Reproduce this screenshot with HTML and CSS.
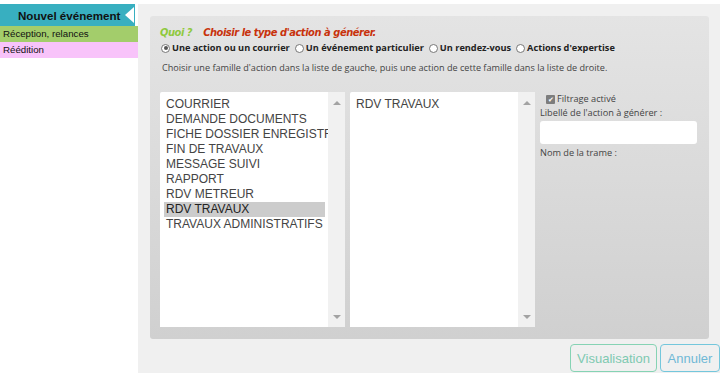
FILE: index.html
```html
<!DOCTYPE html>
<html lang="fr">
<head>
    <meta charset="UTF-8">
    <title>Nouvel événement</title>
    <link rel="stylesheet" href="styles.css">
</head>
<body>
    <div class="app">
        <aside class="menu">
            <div class="menu-title">
                <span>Nouvel événement</span>
                <span class="menu-arrow"></span>
            </div>
            <div class="menu-item green">Réception, relances</div>
            <div class="menu-item pink">Réédition</div>
        </aside>

        <main class="content">
            <section class="panel">
                <h2 class="panel-title"><span class="quoi">Quoi ?</span> <span class="what">Choisir le type d'action à générer.</span></h2>

                <div class="choices">
                    <label><span class="radio checked"></span>Une action ou un courrier</label>
                    <label><span class="radio"></span>Un événement particulier</label>
                    <label><span class="radio"></span>Un rendez-vous</label>
                    <label><span class="radio"></span>Actions d'expertise</label>
                </div>

                <p class="hint">Choisir une famille d'action dans la liste de gauche, puis une action de cette famille dans la liste de droite.</p>

                <div class="pick">
                    <div class="listbox">
                        <ul class="options">
                            <li>COURRIER</li>
                            <li>DEMANDE DOCUMENTS</li>
                            <li>FICHE DOSSIER ENREGISTRE</li>
                            <li>FIN DE TRAVAUX</li>
                            <li>MESSAGE SUIVI</li>
                            <li>RAPPORT</li>
                            <li>RDV METREUR</li>
                            <li class="selected">RDV TRAVAUX</li>
                            <li>TRAVAUX ADMINISTRATIFS</li>
                        </ul>
                        <div class="scrollbar"><span class="up"></span><span class="down"></span></div>
                    </div>

                    <div class="listbox">
                        <ul class="options">
                            <li>RDV TRAVAUX</li>
                        </ul>
                        <div class="scrollbar"><span class="up"></span><span class="down"></span></div>
                    </div>

                    <div class="side">
                        <label class="filter"><span class="check">✔</span>Filtrage activé</label>
                        <div class="field-label">Libellé de l'action à générer :</div>
                        <input class="field" type="text">
                        <div class="field-label">Nom de la trame :</div>
                    </div>
                </div>
            </section>

            <div class="actions">
                <button class="btn btn-view">Visualisation</button>
                <button class="btn btn-cancel">Annuler</button>
            </div>
        </main>
    </div>
</body>
</html>
```

FILE: styles.css
```css
body {
    margin: 0;
    background: #fff;
    font-family: "Liberation Sans", Arial, sans-serif;
    color: #333;
}
.app {
    display: flex;
    padding-top: 4px;
    width: 718px;
}
.menu {
    width: 138px;
    flex: none;
    font-size: 9.7px;
}
.menu-title {
    position: relative;
    width: 135px;
    height: 22px;
    background: #38afc0;
    font-weight: bold;
    font-size: 11.6px;
    color: #111;
    display: flex;
    align-items: center;
    padding-left: 18px;
    box-sizing: border-box;
}
.menu-arrow {
    position: absolute;
    right: 1px;
    top: 3px;
    width: 0;
    height: 0;
    border-top: 8px solid transparent;
    border-bottom: 8px solid transparent;
    border-right: 9px solid #fff;
}
.menu-item {
    height: 16px;
    line-height: 16px;
    padding-left: 3px;
    color: #111;
}
.green {
    background: #a3cd6b;
}
.pink {
    background: #f8c3fa;
}
.content {
    flex: 1;
    background: #f0f0f0;
    padding: 12px 11px 1px 12px;
    height: 356px;
}
.panel {
    height: 323px;
    border-radius: 3px;
    background: linear-gradient(#e4e4e4, #d0d0d0);
    padding: 9px 12px 0 10px;
    box-sizing: border-box;
    font-family: "Open Sans", sans-serif;
}
.panel-title {
    margin: 0;
    font-size: 11px;
    font-style: italic;
    font-weight: bold;
    font-family: "DejaVu Sans Condensed", "DejaVu Sans", sans-serif;
    letter-spacing: -0.45px;
    line-height: 15px;
}
.quoi {
    color: #8fc93d;
    margin-right: 8px;
}
.what {
    color: #c8320c;
}
.choices {
    display: flex;
    gap: 4px;
    font-size: 9.2px;
    font-weight: bold;
    color: #222;
    line-height: 16px;
}
.choices label {
    display: flex;
    align-items: center;
}
.radio {
    width: 9px;
    height: 9px;
    border: 1px solid #777;
    border-radius: 50%;
    background: #fff;
    margin: 0 2px 0 1px;
    box-sizing: border-box;
    position: relative;
}
.radio.checked::after {
    content: "";
    position: absolute;
    left: 1.5px;
    top: 1.5px;
    width: 4px;
    height: 4px;
    border-radius: 50%;
    background: #555;
}
.hint {
    margin: 5px 0 0 2px;
    font-size: 9.1px;
    color: #444;
    line-height: 14px;
}
.pick {
    display: flex;
    gap: 5px;
    margin-top: 17px;
}
.listbox {
    width: 185px;
    height: 235px;
    background: #fff;
    border-radius: 2px 2px 0 0;
    display: flex;
}
.options {
    flex: 1;
    list-style: none;
    margin: 0;
    padding: 5px 3px 0 4px;
    font-family: "Liberation Sans", Arial, sans-serif;
    font-size: 12px;
    line-height: 15px;
    color: #444;
    overflow: hidden;
    white-space: nowrap;
}
.options li {
    padding-left: 2px;
}
.options .selected {
    background: #cccccc;
    color: #222;
}
.scrollbar {
    width: 17px;
    background: #f1f1f1;
    display: flex;
    flex-direction: column;
    justify-content: space-between;
    align-items: center;
    padding: 9px 0 8px;
    box-sizing: border-box;
}
.up, .down {
    width: 0;
    height: 0;
    border-left: 4px solid transparent;
    border-right: 4px solid transparent;
}
.up {
    border-bottom: 4px solid #a3a3a3;
}
.down {
    border-top: 4px solid #a3a3a3;
}
.side {
    width: 157px;
    font-size: 9.2px;
    color: #444;
}
.filter {
    display: flex;
    align-items: center;
    margin: 0 0 0 6px;
    line-height: 14px;
}
.check {
    width: 9px;
    height: 9px;
    background: #7d7d7d;
    color: #fff;
    font-size: 7px;
    line-height: 9px;
    text-align: center;
    margin-right: 2px;
    border-radius: 1px;
}
.field-label {
    line-height: 14px;
}
.field {
    display: block;
    width: 157px;
    height: 23px;
    border: none;
    border-radius: 3px;
    background: #fff;
    margin: 1px 0 2px;
    box-sizing: border-box;
}
.actions {
    display: flex;
    justify-content: flex-end;
    gap: 3px;
    margin-top: 5px;
    margin-right: -11px;
}
.btn {
    height: 28px;
    background: #f0f0f0;
    border-radius: 4px;
    font-family: "Liberation Sans", Arial, sans-serif;
    font-size: 13px;
    padding: 0;
}
.btn-view {
    width: 87px;
    border: 1px solid #86d3b4;
    color: #7ec9b0;
}
.btn-cancel {
    width: 60px;
    border: 1px solid #74c7dc;
    color: #6fb8d6;
}
```
